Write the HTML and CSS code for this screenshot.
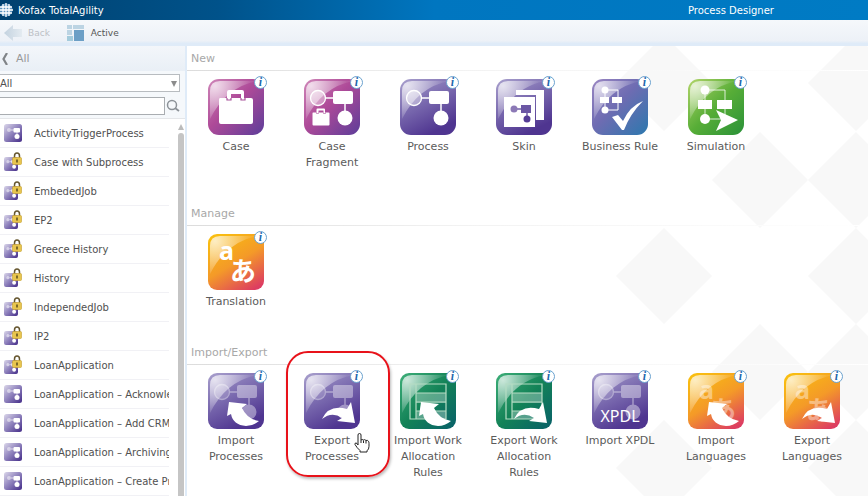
FILE: index.html
```html
<!DOCTYPE html>
<html lang="en">
<head>
<meta charset="utf-8">
<title>Kofax TotalAgility - Process Designer</title>
<link rel="stylesheet" href="styles.css">
</head>
<body>
<svg class="defs" width="0" height="0" aria-hidden="true">
  <defs>
    <linearGradient id="g-magenta" x1="0" y1="0" x2="1" y2="1"><stop offset="0" stop-color="#cf86b8"/><stop offset=".45" stop-color="#ae4a98"/><stop offset="1" stop-color="#5d3d99"/></linearGradient>
    <linearGradient id="g-purple" x1="0" y1="0" x2=".5" y2="1"><stop offset="0" stop-color="#a9a0cd"/><stop offset=".5" stop-color="#7a6aaf"/><stop offset="1" stop-color="#4f3590"/></linearGradient>
    <linearGradient id="g-small" x1="0" y1="0" x2="1" y2="1"><stop offset="0" stop-color="#dcd8ea"/><stop offset=".45" stop-color="#9488c0"/><stop offset="1" stop-color="#432b88"/></linearGradient>
    <linearGradient id="g-rule" x1="0" y1="0" x2="1" y2="1"><stop offset="0" stop-color="#9a86c2"/><stop offset=".45" stop-color="#6e6cb2"/><stop offset="1" stop-color="#2c78ae"/></linearGradient>
    <linearGradient id="g-green" x1="0" y1="0" x2="1" y2="1"><stop offset="0" stop-color="#b2d56a"/><stop offset=".5" stop-color="#57ad37"/><stop offset="1" stop-color="#2a9138"/></linearGradient>
    <linearGradient id="g-teal" x1="0" y1="0" x2="1" y2="1"><stop offset="0" stop-color="#3dae78"/><stop offset=".5" stop-color="#138257"/><stop offset="1" stop-color="#086069"/></linearGradient>
    <linearGradient id="g-orange" x1="0.2" y1="0" x2=".8" y2="1"><stop offset="0" stop-color="#f9bd10"/><stop offset=".5" stop-color="#f49a28"/><stop offset="1" stop-color="#dd3d61"/></linearGradient>
    <radialGradient id="g-shine" gradientUnits="userSpaceOnUse" cx="7" cy="7" r="36"><stop offset="0" stop-color="#fff" stop-opacity=".75"/><stop offset="1" stop-color="#fff" stop-opacity=".08"/></radialGradient>
    <linearGradient id="g-back" x1="0" y1="0" x2="1" y2="0"><stop offset="0" stop-color="#c3d2df"/><stop offset="1" stop-color="#e4ebf1"/></linearGradient>
  </defs>
  <symbol id="shine" viewBox="0 0 56 56"><path d="M2 40V12Q2 2 12 2h37Q18 8 2 40z" fill="url(#g-shine)"/></symbol>
  <symbol id="flow" viewBox="0 0 56 56"><path d="M21 19h9M41 25v8" stroke="#fff" stroke-width="1.5"/><circle cx="14" cy="19" r="7.5" fill="#fff" fill-opacity=".4" stroke="#fff" stroke-width="1.3"/><rect x="29" y="12" width="20" height="13" rx="2" fill="#fff"/><circle cx="41" cy="39" r="7.5" fill="#fff"/></symbol>
  <symbol id="bag" viewBox="0 0 36 36"><path d="M2 9h7V3q0-2 2-2h13q2 0 2 2v6h7q2 0 2 2v22q0 2-2 2H3q-2 0-2-2V11q0-2 1-2zM13 5v4h10V5z" fill="#fff" fill-rule="evenodd"/><path d="M9 9v2h4V9M23 9v2h4V9" fill="none" stroke="#a75299" stroke-width="1.2"/></symbol>
  <symbol id="arrow-in" viewBox="0 0 56 56"><path d="M21 29l18 2-5 4q5 11 17 13-6 5-13 5-13-1-15-12l-4 2z" fill="#fff"/></symbol>
  <symbol id="arrow-out" viewBox="0 0 56 56"><path d="M18 46q7-15 25-10l4-7 4 21-18-2 5-3q-10-7-20 1z" fill="#fff"/></symbol>
  <symbol id="grid" viewBox="0 0 56 56"><path d="M16 20h30v10H16zM16 38h30v8H16z" fill="#fff" fill-opacity=".3"/><path d="M10 11h36v35H10zM16 11v35M16 20h30M16 29h30M16 38h30" fill="none" stroke="#b5dcc4" stroke-width="1.2"/></symbol>
  <symbol id="process-small" viewBox="0 0 18 18"><rect width="18" height="18" rx="2.5" fill="url(#g-small)"/><circle cx="5" cy="6" r="2" fill="#fff" fill-opacity=".5"/><rect x="9.5" y="4" width="6.500" height="4.500" rx="1" fill="#fff"/><path d="M7 6h3M13 8v3" stroke="#fff" stroke-opacity=".7"/><circle cx="13" cy="12.5" r="2.5" fill="#fff"/></symbol>
  <symbol id="lock" viewBox="0 0 10 13"><path d="M2.5 7V4Q2.500 1 5 1t2.500 3v3" fill="none" stroke="#65562f" stroke-width="1.500"/><rect x=".5" y="5.500" width="9" height="7" rx="1" fill="#e8c54e" stroke="#c59d2d" stroke-width=".6"/><path d="M5 7.500v3" stroke="#57481d" stroke-width="1.500"/></symbol>
  <symbol id="locked-small" viewBox="0 0 18 20"><use href="#process-small" x="0" y="5" width="14" height="14"/><use href="#lock" x="8" y="0" width="10" height="13"/></symbol>
</svg>

<header class="titlebar">
  <svg class="brand-icon" viewBox="0 0 14 14" aria-hidden="true"><circle cx="6" cy="7" r="6.500" fill="#5d94bd"/><path d="M0 4h12M0 7h13M0 10h12M3 1v12M6 0v14M9 1v12" stroke="#fff" stroke-width="1.300"/></svg>
  <span class="brand">Kofax TotalAgility</span>
  <h1 class="title">Process Designer</h1>
</header>

<nav class="toolbar">
  <button class="tool" type="button" disabled><svg class="tool-icon" viewBox="0 0 18 16" aria-hidden="true"><path d="M0 8l9-8v4h9v8H9v4z" fill="url(#g-back)"/></svg>Back</button>
  <button class="tool" type="button"><svg class="tool-icon" viewBox="0 0 18 16" aria-hidden="true"><path d="M0 0h5v4H0zM6 0h11v4H6zM0 5h5v5H0z" fill="#bcd4e3"/><path d="M0 11h6v5H0z" fill="#a4cbdc"/><path d="M7 5h10v11H7z" fill="#6c9fc6"/></svg>Active</button>
</nav>

<div class="workspace">
  <aside class="sidebar">
    <a class="crumb" href="#"><svg class="chevron" viewBox="0 0 6 12" aria-hidden="true"><path d="M5 0L1.500 6 5 12" fill="none" stroke="#808488" stroke-width="2.200"/></svg>All</a>
    <div class="filters">
      <div class="select-wrap"><select class="category" aria-label="Category"><option>All</option></select></div>
      <div class="search">
        <input class="search-box" type="text" aria-label="Search processes">
        <button class="search-button" type="button" aria-label="Search"><svg viewBox="0 0 14 14" width="14" height="14"><circle cx="6" cy="6" r="4.500" fill="none" stroke="#8c9298" stroke-width="1.500"/><path d="M9 9l4 3" stroke="#8c9298" stroke-width="1.800"/></svg></button>
      </div>
    </div>
    <div class="list-area">
      <ul class="list">
        <li><svg class="row-icon"><use href="#process-small"/></svg><a href="#">ActivityTriggerProcess</a></li>
        <li><svg class="row-icon row-icon-locked"><use href="#locked-small"/></svg><a href="#">Case with Subprocess</a></li>
        <li><svg class="row-icon row-icon-locked"><use href="#locked-small"/></svg><a href="#">EmbededJob</a></li>
        <li><svg class="row-icon row-icon-locked"><use href="#locked-small"/></svg><a href="#">EP2</a></li>
        <li><svg class="row-icon row-icon-locked"><use href="#locked-small"/></svg><a href="#">Greece History</a></li>
        <li><svg class="row-icon row-icon-locked"><use href="#locked-small"/></svg><a href="#">History</a></li>
        <li><svg class="row-icon row-icon-locked"><use href="#locked-small"/></svg><a href="#">IndependedJob</a></li>
        <li><svg class="row-icon row-icon-locked"><use href="#locked-small"/></svg><a href="#">IP2</a></li>
        <li><svg class="row-icon row-icon-locked"><use href="#locked-small"/></svg><a href="#">LoanApplication</a></li>
        <li><svg class="row-icon"><use href="#process-small"/></svg><a href="#">LoanApplication – Acknowledge</a></li>
        <li><svg class="row-icon"><use href="#process-small"/></svg><a href="#">LoanApplication – Add CRM</a></li>
        <li><svg class="row-icon"><use href="#process-small"/></svg><a href="#">LoanApplication – Archiving</a></li>
        <li><svg class="row-icon"><use href="#process-small"/></svg><a href="#">LoanApplication – Create Process</a></li>
      </ul>
      <div class="scrollbar"><div class="scroll-up"></div><div class="scroll-thumb"></div></div>
    </div>
  </aside>

  <main class="main">
    <svg class="backdrop" width="288" height="450" aria-hidden="true"><path fill="#f8f8f8" d="M84-11l48 48-48 48-48-48zM276-11l48 48-48 48-48-48zM180 86l48 48-48 48-48-48zM276 86l48 48-48 48-48-48zM84 182l48 48-48 48-48-48zM276 182l48 48-48 48-48-48zM180 278l48 48-48 48-48-48zM276 278l48 48-48 48-48-48zM84 374l48 48-48 48-48-48zM276 374l48 48-48 48-48-48z"/></svg>
    <section class="group">
      <h2>New</h2>
      <div class="tiles">
        <button class="tile" type="button"><span class="art"><svg viewBox="0 0 56 56"><rect width="56" height="56" rx="11" fill="url(#g-magenta)"/><use href="#shine"/><use href="#bag" x="10" y="10" width="36" height="36"/></svg><span class="info">i</span></span>Case</button>
        <button class="tile" type="button"><span class="art"><svg viewBox="0 0 56 56"><rect width="56" height="56" rx="11" fill="url(#g-magenta)"/><use href="#shine"/><use href="#flow"/><use href="#bag" x="8" y="29" width="18" height="18"/></svg><span class="info">i</span></span>Case Fragment</button>
        <button class="tile" type="button"><span class="art"><svg viewBox="0 0 56 56"><rect width="56" height="56" rx="11" fill="url(#g-purple)"/><use href="#shine"/><use href="#flow"/></svg><span class="info">i</span></span>Process</button>
        <button class="tile" type="button"><span class="art"><svg viewBox="0 0 56 56"><rect width="56" height="56" rx="11" fill="url(#g-purple)"/><use href="#shine"/><path d="M20 11h28v30h-8V16H20z" fill="#fff"/><path d="M8 18h31v30H8z" fill="#fff"/><path d="M18 30h8M31 33v7" stroke="#725fa9" stroke-width="1.500"/><circle cx="18" cy="30" r="3.500" fill="#8c79b6"/><path d="M25 26h10v8H25z" fill="#6b57a4"/><circle cx="31" cy="40" r="3.500" fill="#553d96"/></svg><span class="info">i</span></span>Skin</button>
        <button class="tile" type="button"><span class="art"><svg viewBox="0 0 56 56"><rect width="56" height="56" rx="11" fill="url(#g-rule)"/><use href="#shine"/><path d="M13 11v20h13V11z" fill="none" stroke="#fff"/><circle cx="13" cy="11" r="3.500" fill="#fff"/><circle cx="13" cy="31" r="3.500" fill="#fff"/><path d="M8 18h9v6H8zM20 18h10v6H20z" fill="#fff"/><path d="M20 38l6-2 5 6q7-15 20-20-13 13-19 29h-2z" fill="#fff"/></svg><span class="info">i</span></span>Business Rule</button>
        <button class="tile" type="button"><span class="art"><svg viewBox="0 0 56 56"><rect width="56" height="56" rx="11" fill="url(#g-green)"/><use href="#shine"/><path d="M17 11v29h20V11z" fill="none" stroke="#fff" stroke-opacity=".8"/><circle cx="17" cy="11" r="4.500" fill="#fff"/><circle cx="17" cy="40" r="5" fill="#fff"/><path d="M10 21h14v9H10zM29 21h15v9H29z" fill="#fff"/><path d="M28 31l22 10-22 11 5-11z" fill="#fff"/></svg><span class="info">i</span></span>Simulation</button>
      </div>
    </section>
    <section class="group">
      <h2>Manage</h2>
      <div class="tiles">
        <button class="tile" type="button"><span class="art"><svg viewBox="0 0 56 56"><rect width="56" height="56" rx="9" fill="url(#g-orange)"/><use href="#shine"/><text class="latin" x="11" y="26">a</text><text class="kana" x="22" y="47">あ</text></svg><span class="info">i</span></span>Translation</button>
      </div>
    </section>
    <section class="group">
      <h2>Import/Export</h2>
      <div class="tiles">
        <button class="tile" type="button"><span class="art"><svg viewBox="0 0 56 56"><rect width="56" height="56" rx="9" fill="url(#g-purple)"/><use href="#shine"/><use href="#flow" opacity=".4"/><use href="#arrow-in"/></svg><span class="info">i</span></span>Import Processes</button>
        <button class="tile tile-marked" type="button"><span class="art"><svg viewBox="0 0 56 56"><rect width="56" height="56" rx="9" fill="url(#g-purple)"/><use href="#shine"/><use href="#flow" opacity=".4"/><use href="#arrow-out"/></svg><span class="info">i</span></span>Export Processes<svg class="pointer" viewBox="0 0 16 20" aria-hidden="true"><path d="M4 11V2q0-1.500 1.500-1.500T7 2v5q1-1 2.500 0 1-1 2.500.5 1.500-.7 2.500.8.500.7.500 2v3q0 3-2 4.500V19H6v-1.500Q3 15 1 11.500q-.5-1.500 1-1.500 1 0 2 2z" fill="#fff" stroke="#222"/><path d="M7 7v3M9.500 7.500V10M12 8v2.500" stroke="#222"/></svg></button>
        <button class="tile" type="button"><span class="art"><svg viewBox="0 0 56 56"><rect width="56" height="56" rx="9" fill="url(#g-teal)"/><use href="#shine"/><use href="#grid"/><use href="#arrow-in"/></svg><span class="info">i</span></span>Import Work Allocation Rules</button>
        <button class="tile" type="button"><span class="art"><svg viewBox="0 0 56 56"><rect width="56" height="56" rx="9" fill="url(#g-teal)"/><use href="#shine"/><use href="#grid"/><use href="#arrow-out"/></svg><span class="info">i</span></span>Export Work Allocation Rules</button>
        <button class="tile" type="button"><span class="art"><svg viewBox="0 0 56 56"><rect width="56" height="56" rx="9" fill="url(#g-purple)"/><use href="#shine"/><use href="#flow" opacity=".4"/><text class="xpdl" x="28" y="49">XPDL</text></svg><span class="info">i</span></span>Import XPDL</button>
        <button class="tile" type="button"><span class="art"><svg viewBox="0 0 56 56"><rect width="56" height="56" rx="9" fill="url(#g-orange)"/><use href="#shine"/><g opacity=".4"><text class="latin" x="11" y="26">a</text><text class="kana" x="22" y="47">あ</text></g><use href="#arrow-in"/></svg><span class="info">i</span></span>Import Languages</button>
        <button class="tile" type="button"><span class="art"><svg viewBox="0 0 56 56"><rect width="56" height="56" rx="9" fill="url(#g-orange)"/><use href="#shine"/><g opacity=".4"><text class="latin" x="11" y="26">a</text><text class="kana" x="22" y="47">あ</text></g><use href="#arrow-out"/></svg><span class="info">i</span></span>Export Languages</button>
      </div>
    </section>
  </main>
</div>
</body>
</html>
```
FILE: styles.css
```css
* { box-sizing: border-box; }

body {
  margin: 0;
  height: 100vh;
  overflow: hidden;
  display: flex;
  flex-direction: column;
  font-family: "DejaVu Sans", "Noto Sans CJK JP", sans-serif;
  font-size: 10px;
  color: #505050;
  background: #fff;
}

button, input, select { font: inherit; color: inherit; }
button { border: 0; padding: 0; background: none; }
a { color: inherit; text-decoration: none; }
.defs { position: absolute; }

.titlebar {
  flex: none;
  height: 20px;
  display: grid;
  grid-template-columns: auto 1fr 180px;
  align-items: center;
  color: #fff;
  background: linear-gradient(90deg, #00416f 0, #00528a 25%, #0076c0 50%, #007bc4 100%);
}
.brand-icon { width: 14px; height: 14px; }
.brand { padding-left: 4px; }
.title { margin: 0; font-size: 10px; font-weight: 400; }

.toolbar {
  flex: none;
  height: 26px;
  display: flex;
  align-items: center;
  gap: 17px;
  padding: 0 4px;
  background: linear-gradient(#f5f8fb, #edf1f7 80%, #dfebf8 90%);
}
.tool { display: flex; align-items: center; gap: 6px; font-size: 9px; color: #555; }
.tool:disabled { color: #bcc0c5; }
.tool-icon { width: 18px; height: 16px; }

.workspace { flex: 1; min-height: 0; display: flex; }

.sidebar {
  flex: none;
  width: 187px;
  display: flex;
  flex-direction: column;
  border-right: 2px solid #dfebf8;
}
.crumb {
  height: 25px;
  display: flex;
  align-items: center;
  gap: 8px;
  padding-left: 2px;
  font-size: 11px;
  color: #999;
  background: linear-gradient(#f3f6fa, #e9eff6);
}
.chevron { width: 6px; height: 12px; }
.filters {
  display: flex;
  flex-direction: column;
  gap: 5px;
  padding: 3px 5px 3px 0;
  background: #f5f8fb;
  border-bottom: 1px solid #e4e6e9;
}
.select-wrap { position: relative; display: flex; }
.select-wrap::after {
  content: "";
  position: absolute;
  right: 3px;
  top: 7px;
  border: 3px solid transparent;
  border-top: 6px solid #8c8c8c;
  border-bottom: 0;
}
.category {
  appearance: none;
  width: 100%;
  height: 18px;
  padding: 0;
  border: 1px solid #b8bcc0;
  border-left: 0;
  border-radius: 0;
  background: #fff;
}
.search { display: flex; align-items: center; gap: 1px; }
.search-box {
  flex: 1;
  min-width: 0;
  height: 18px;
  padding: 0 4px;
  border: 1px solid #a9adb1;
  border-left: 0;
  background: #fff;
}
.search-button { width: 14px; height: 14px; }

.list-area { flex: 1; min-height: 0; display: flex; justify-content: space-between; overflow: hidden; }
.list { width: 169px; margin: 0; padding: 0; list-style: none; }
.list li {
  height: 29px;
  display: flex;
  align-items: center;
  gap: 12px;
  padding-left: 4px;
  border-bottom: 1px solid #f1f1f5;
  white-space: nowrap;
  overflow: hidden;
}
.row-icon { flex: none; width: 18px; height: 18px; }
.row-icon-locked { height: 20px; }
.scrollbar { width: 8px; display: flex; flex-direction: column; gap: 3px; padding: 5px 1px 0; }
.scroll-up { border: 3px solid transparent; border-top: 0; border-bottom: 6px solid #bbb; }
.scroll-thumb { flex: 1; border-radius: 3px 3px 0 0; background: #c5c5c5; }

.main { position: relative; flex: 1; min-width: 0; overflow: hidden; }
.backdrop { position: absolute; top: 0; right: 0; z-index: -1; }

.group { padding-bottom: 30px; }
.group h2 {
  height: 25px;
  margin: 0;
  padding-left: 4px;
  border-bottom: 1px solid;
  border-image: linear-gradient(90deg, #dcdcdc, #f2f2f2 40%, #fff) 1;
  font-size: 11px;
  font-weight: 400;
  line-height: 25px;
  color: #a8a8a8;
}
.tiles { display: flex; padding: 8px 0 0 1px; }
.tile {
  position: relative;
  flex: none;
  width: 96px;
  padding: 0 10px;
  display: flex;
  flex-direction: column;
  align-items: center;
  justify-content: flex-start;
  gap: 4px;
  font-size: 11px;
  line-height: 16px;
  color: #5b5b5b;
}
.art { position: relative; display: block; width: 56px; height: 56px; }
.art svg { display: block; width: 56px; height: 56px; }
.info {
  position: absolute;
  top: -3px;
  right: -3px;
  width: 13px;
  height: 13px;
  border: 1px solid #6ba2cf;
  border-radius: 50%;
  background: #fff;
  color: #1f68ad;
  font: italic bold 12px/10px "Liberation Serif", serif;
  text-align: center;
}
.latin { font: bold 25px "Noto Sans", sans-serif; fill: #fff; }
.kana { font: bold 26px "Noto Sans CJK JP", sans-serif; fill: #fff; }
.xpdl { font: 16px "Noto Sans", sans-serif; fill: #fff; text-anchor: middle; }

.tile-marked::after {
  content: "";
  position: absolute;
  top: -22px;
  left: 2px;
  right: -10px;
  height: 122px;
  border: 2px solid #e8121a;
  border-radius: 22px;
  box-shadow: 1px 2px 3px #bbb;
}
.pointer { position: absolute; top: 60px; left: 70px; width: 16px; height: 20px; }
```
